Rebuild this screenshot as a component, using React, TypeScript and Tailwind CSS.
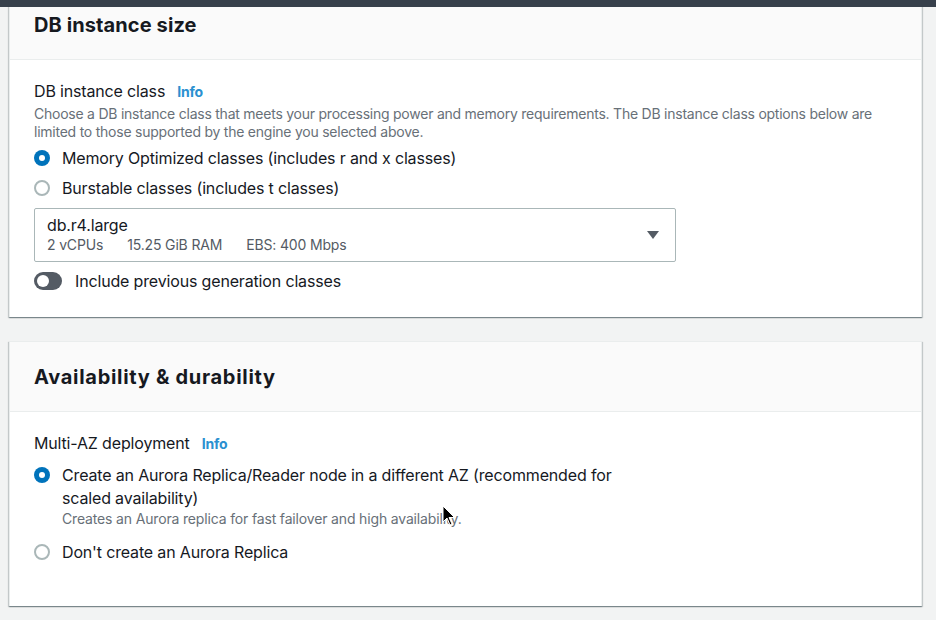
import React from 'react'

function Radio({ checked }: { checked?: boolean }) {
  return checked ? (
    <span className="mt-[3px] flex h-4 w-4 shrink-0 items-center justify-center rounded-full bg-[#0073bb]">
      <span className="h-[6px] w-[6px] rounded-full bg-white" />
    </span>
  ) : (
    <span className="mt-[3px] h-4 w-4 shrink-0 rounded-full border-2 border-[#aab7b8] bg-white" />
  )
}

function Label({ text }: { text: string }) {
  return (
    <div className="flex items-baseline gap-3 text-[16px] leading-[22px] text-[#16191f]">
      <span>{text}</span>
      <a className="text-[14px] font-bold text-[#2b90d0]">Info</a>
    </div>
  )
}

export default function App() {
  return (
    <div className="relative min-h-[620px] overflow-hidden bg-[#f2f3f3] font-[family-name:Inter,'Noto_Sans',sans-serif] tracking-[-0.01em] text-[#16191f]">
      <div className="relative z-10 h-[7px] bg-[#37404b]" />

      <section className="relative -mt-[16px] ml-[9px] w-[913px] border-x border-[#eaeded] bg-white shadow-[0_1px_1px_0_rgba(0,28,36,0.3),1px_1px_1px_0_rgba(0,28,36,0.15),-1px_1px_1px_0_rgba(0,28,36,0.15)]">
        <div className="flex h-[69px] items-center border-b border-[#eaeded] bg-[#fafafa] px-6">
          <h2 className="text-[20px] font-bold tracking-[0.1px]">DB instance size</h2>
        </div>
        <div className="px-6 pt-[20px] pb-[25px]">
          <Label text="DB instance class" />
          <p className="mt-[2px] text-[14px] leading-[18px] tracking-[-0.017em] text-[#687078]">
            Choose a DB instance class that meets your processing power and memory requirements. The DB instance class options below are limited to those supported by the engine you selected above.
          </p>
          <div className="mt-[6px] flex flex-col gap-2">
            <label className="flex gap-3 text-[16px] leading-[22px]">
              <Radio checked />
              Memory Optimized classes (includes r and x classes)
            </label>
            <label className="flex gap-3 text-[16px] leading-[22px]">
              <Radio />
              Burstable classes (includes t classes)
            </label>
          </div>
          <div className="mt-[9px] flex h-[54px] w-[642px] items-center justify-between rounded-[2px] border border-[#aab7b8] bg-white pl-3 pr-4">
            <div>
              <div className="text-[16px] leading-[20px]">db.r4.large</div>
              <div className="flex gap-6 text-[14px] leading-[20px] text-[#545b64]">
                <span>2 vCPUs</span>
                <span>15.25 GiB RAM</span>
                <span>EBS: 400 Mbps</span>
              </div>
            </div>
            <svg width="12" height="8" viewBox="0 0 12 8">
              <path d="M0 0h12L6 8z" fill="#545b64" />
            </svg>
          </div>
          <label className="mt-[8px] flex items-center gap-[13px] text-[16px] leading-[22px]">
            <span className="flex h-[18px] w-[28px] items-center rounded-full bg-[#545b64] px-[3px]">
              <span className="h-[12px] w-[12px] rounded-full bg-white" />
            </span>
            Include previous generation classes
          </label>
        </div>
      </section>

      <section className="relative mt-6 ml-[9px] w-[913px] border border-b-0 border-[#eaeded] bg-white shadow-[0_1px_1px_0_rgba(0,28,36,0.3),1px_1px_1px_0_rgba(0,28,36,0.15),-1px_1px_1px_0_rgba(0,28,36,0.15)]">
        <div className="flex h-[70px] items-center border-b border-[#eaeded] bg-[#fafafa] px-6">
          <h2 className="text-[20px] font-bold tracking-[0.7px]">Availability &amp; durability</h2>
        </div>
        <div className="px-6 pt-[20px] pb-[43px]">
          <Label text="Multi-AZ deployment" />
          <label className="mt-[9px] flex gap-3">
            <Radio checked />
            <div className="w-[580px]">
              <div className="text-[16px] leading-[23px]">
                Create an Aurora Replica/Reader node in a different AZ (recommended for scaled availability)
              </div>
              <div className="text-[14px] leading-[18px] text-[#687078]">
                Creates an Aurora replica for fast failover and high availability.
              </div>
            </div>
          </label>
          <label className="mt-[13px] flex gap-3 text-[16px] leading-[22px]">
            <Radio />
            Don't create an Aurora Replica
          </label>
        </div>
      </section>

      <svg className="absolute left-[442px] top-[505px]" width="14" height="21" viewBox="0 0 14 21">
        <path d="M1 1v16l4-4 3 7 2-1-3-6.5h5.5z" fill="#000" stroke="#fff" strokeWidth="1" />
      </svg>
    </div>
  )
}
